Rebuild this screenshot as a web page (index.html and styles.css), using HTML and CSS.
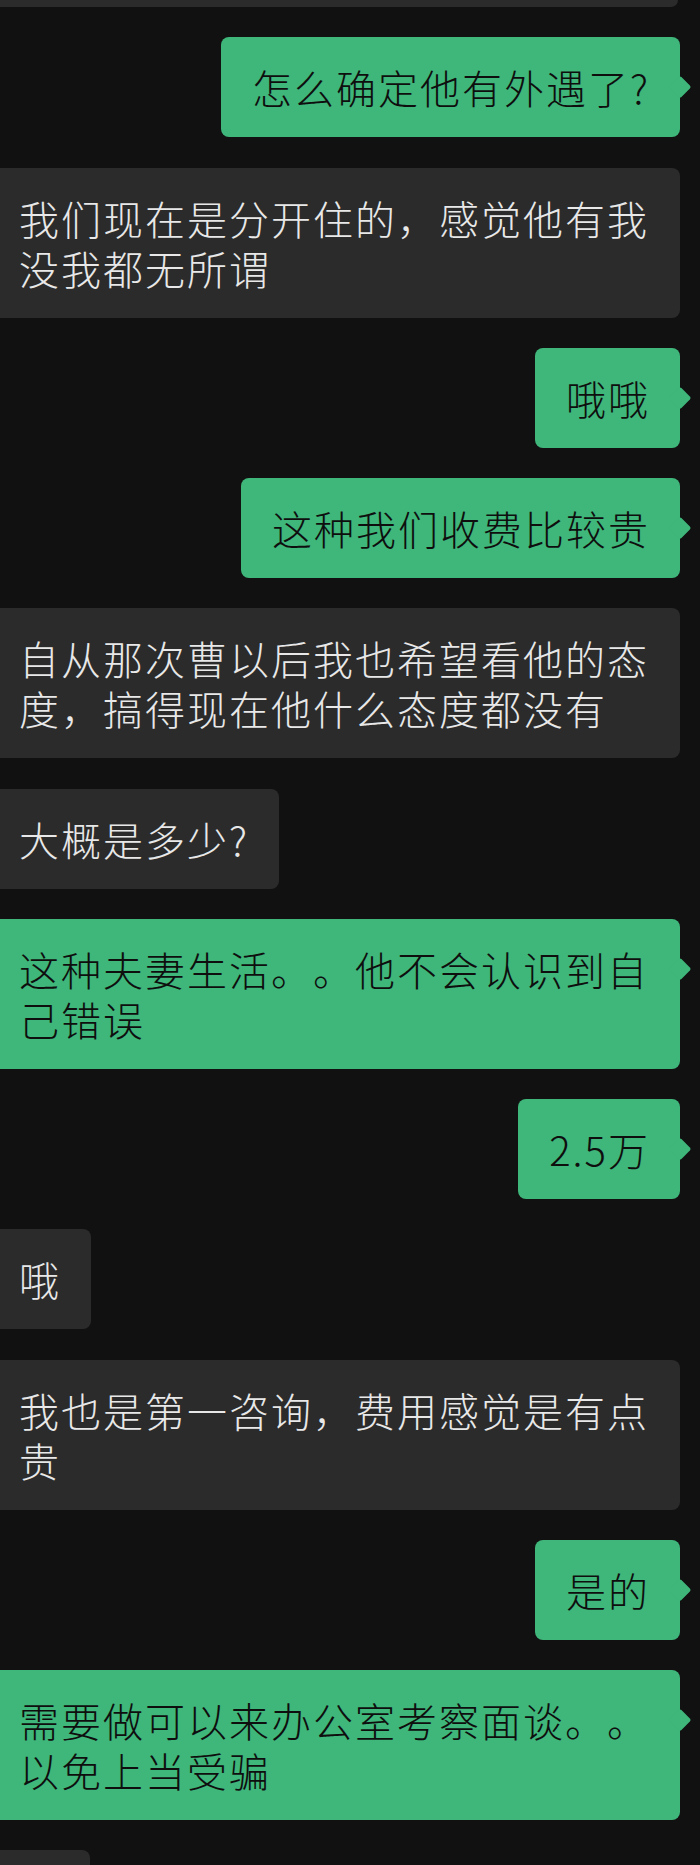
FILE: index.html
```html
<!DOCTYPE html>
<html lang="zh-CN">
<head>
<meta charset="utf-8">
<title>聊天记录</title>
<link rel="stylesheet" href="styles.css">
</head>
<body>
<div class="chat">
  <div class="row theirs"><div class="bubble stub-top"></div></div>
  <div class="row mine"><div class="bubble">怎么确定他有外遇了?</div></div>
  <div class="row theirs"><div class="bubble">我们现在是分开住的，感觉他有我没我都无所谓</div></div>
  <div class="row mine"><div class="bubble">哦哦</div></div>
  <div class="row mine"><div class="bubble">这种我们收费比较贵</div></div>
  <div class="row theirs"><div class="bubble">自从那次曹以后我也希望看他的态度，搞得现在他什么态度都没有</div></div>
  <div class="row theirs"><div class="bubble">大概是多少?</div></div>
  <div class="row mine"><div class="bubble">这种夫妻生活。。他不会认识到自己错误</div></div>
  <div class="row mine"><div class="bubble">2.5万</div></div>
  <div class="row theirs"><div class="bubble">哦</div></div>
  <div class="row theirs"><div class="bubble">我也是第一咨询，费用感觉是有点贵</div></div>
  <div class="row mine"><div class="bubble">是的</div></div>
  <div class="row mine"><div class="bubble">需要做可以来办公室考察面谈。。以免上当受骗</div></div>
  <div class="row theirs"><div class="bubble stub-bottom"></div></div>
</div>
</body>
</html>
```
FILE: styles.css
```css
html, body {
  margin: 0;
  padding: 0;
  background: #111111;
  overflow-x: hidden;
}

body {
  font-family: "Noto Sans CJK SC", "Noto Sans", sans-serif;
}

.chat {
  display: flex;
  flex-direction: column;
  gap: 30.25px;
  width: 712px;
  margin-left: -12px;
  padding-bottom: 60px;
}

.row {
  display: flex;
  padding-right: 20px;
}

.row.mine {
  justify-content: flex-end;
}

.row.theirs {
  justify-content: flex-start;
}

.bubble {
  position: relative;
  box-sizing: border-box;
  padding: 25px 30px 25px 31px;
  border-radius: 8px;
  font-size: 40px;
  font-weight: 300;
  line-height: 50px;
  letter-spacing: 2px;
  text-spacing-trim: space-all;
}

.theirs .bubble {
  background: #2b2b2b;
  color: #e8e8e8;
}

.mine .bubble {
  background: #3fb67a;
  color: #0e0e0e;
}

.mine .bubble::after {
  content: "";
  position: absolute;
  right: -8px;
  top: 42px;
  width: 16px;
  height: 16px;
  background: #3fb67a;
  border-radius: 2px;
  transform: rotate(45deg);
}

.bubble.stub-top {
  width: 690px;
  height: 7px;
  padding: 0;
  border-radius: 0 0 8px 8px;
}

.bubble.stub-bottom {
  width: 102px;
  height: 100px;
  padding: 0;
}
```
